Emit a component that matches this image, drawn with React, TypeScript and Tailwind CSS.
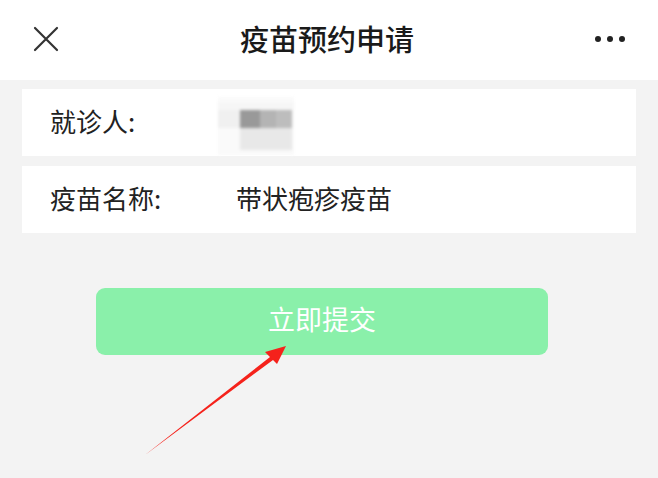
import React from 'react';

const font = { fontFamily: '"Noto Sans CJK SC", "Noto Sans", sans-serif' };

function Row({ label, children }: { label: string; children: React.ReactNode }) {
  return (
    <div className="flex h-[67px] items-center bg-white pb-[5px] pl-[28px] text-[26px] text-[#222]">
      <div className="w-[186px]">{label}</div>
      {children}
    </div>
  );
}

export default function App() {
  return (
    <div className="relative h-[478px] w-[658px] overflow-hidden bg-[#f3f3f3]" style={font}>
      <div className="flex h-[80px] items-center justify-between bg-white px-[33px] pb-[2px]">
        <svg width="26" height="26" viewBox="0 0 26 26" className="text-[#333]">
          <path d="M2 2 L24 24 M24 2 L2 24" stroke="currentColor" strokeWidth="2.2" strokeLinecap="round" />
        </svg>
        <div className="text-[29px] font-medium text-[#1a1a1a]">疫苗预约申请</div>
        <div className="flex gap-[6px]">
          <span className="h-[6px] w-[6px] rounded-full bg-[#222]" />
          <span className="h-[6px] w-[6px] rounded-full bg-[#222]" />
          <span className="h-[6px] w-[6px] rounded-full bg-[#222]" />
        </div>
      </div>

      <div className="flex flex-col gap-[10px] px-[22px] pt-[9px]">
        <Row label="就诊人:">
          <div className="-ml-[18px] mt-[12px] flex h-[58px] w-[76px] flex-col justify-center bg-[#fafafa] blur-[1.5px]">
            <div className="h-[8px] w-full bg-[#f6f6f6]" />
            <div className="flex h-[18px]">
              <div className="w-[22px] bg-[#f0f0f0]" />
              <div className="w-[20px] bg-[#999]" />
              <div className="w-[16px] bg-[#b4b4b4]" />
              <div className="w-[16px] bg-[#bdbdbd]" />
            </div>
            <div className="ml-[22px] h-[22px] w-[52px] bg-[#e8e8e8]" />
          </div>
        </Row>
        <Row label="疫苗名称:">
          <div>带状疱疹疫苗</div>
        </Row>
      </div>

      <button className="ml-[96px] mt-[55px] flex h-[67px] w-[452px] items-center justify-center rounded-[9px] bg-[#8af0aa] pb-[5px] text-[27px] text-white">
        立即提交
      </button>

      <svg className="absolute left-0 top-0" width="658" height="478" viewBox="0 0 658 478">
        <path d="M145 455 L270 357 L265 352 L286 346 L277 364 L273 360 Z" fill="#f5221b" />
      </svg>
    </div>
  );
}
